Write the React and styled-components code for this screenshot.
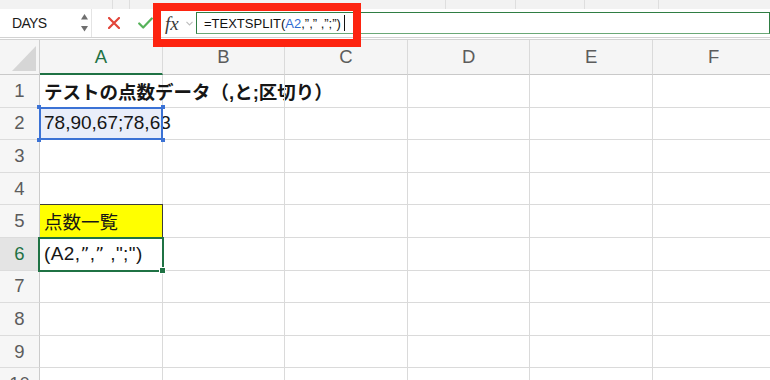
import styled, { createGlobalStyle } from "styled-components";

const GlobalStyle = createGlobalStyle`
  html, body {
    margin: 0;
    padding: 0;
    background: #ffffff;
    overflow: hidden;
  }
  body {
    width: 770px;
    height: 380px;
    font-family: "Liberation Sans", "Noto Sans CJK JP", sans-serif;
  }
`;

const Window = styled.div`
  position: relative;
  width: 770px;
  height: 380px;
  overflow: hidden;
`;

const Ribbon = styled.div`
  display: flex;
  height: 9px;
  background: #f2f2f2;
`;

const RibbonItem = styled.div`
  flex: none;
  width: ${(p) => p.$w}px;
  border-right: 1px solid #dedede;
  box-sizing: border-box;
`;

const FormulaBar = styled.div`
  display: flex;
  align-items: center;
  height: 28px;
  background: #ffffff;
  border-bottom: 3px double #d2d2d2;
`;

const NameBox = styled.div`
  flex: none;
  display: flex;
  align-items: center;
  width: 92px;
  height: 100%;
  box-sizing: border-box;
  padding: 0 2px 0 12px;
  border-right: 1px solid #e4e4e4;
  font-size: 14px;
  letter-spacing: -0.7px;
  color: #1a1a1a;
`;

const Spinner = styled.svg`
  margin-left: auto;
`;

const Actions = styled.div`
  flex: none;
  display: flex;
  align-items: center;
  gap: 18px;
  width: 61px;
  box-sizing: border-box;
  padding-left: 16px;
`;

const FxArea = styled.div`
  flex: none;
  display: flex;
  align-items: center;
  gap: 7px;
  width: 43px;
  box-sizing: border-box;
  padding-left: 12px;
`;

const Fx = styled.span`
  font-family: "Liberation Serif", "DejaVu Serif", serif;
  font-style: italic;
  font-size: 19px;
  color: #3a3a3a;
  line-height: 1;
`;

const FormulaInput = styled.div`
  flex: 1;
  display: flex;
  align-items: center;
  height: 22px;
  box-sizing: border-box;
  padding-left: 7px;
  border: 1px solid #2f7d43;
  border-bottom-color: #6aa877;
  font-family: "Liberation Sans", sans-serif;
  font-size: 13px;
  color: #111111;
  white-space: nowrap;
`;

const Ref = styled.span`
  color: #2d6bd2;
`;

const Caret = styled.span`
  display: inline-block;
  width: 1px;
  height: 16px;
  margin-left: 3px;
  background: #111111;
`;

const Highlight = styled.div`
  position: absolute;
  left: 153px;
  top: 3px;
  width: 208px;
  height: 44px;
  box-sizing: border-box;
  border: 8px solid #fd2410;
`;

const Sheet = styled.div`
  display: grid;
  grid-template-columns: 40px repeat(6, 122.6px);
  grid-template-rows: 35px repeat(10, 32.6px);
`;

const Corner = styled.div`
  display: flex;
  align-items: flex-end;
  justify-content: flex-end;
  padding: 0 3px 3px 0;
  background: #f5f5f5;
  border-right: 1px solid #cfcfcf;
  border-bottom: 1px solid #c9c9c9;
`;

const ColHeader = styled.div`
  display: flex;
  align-items: center;
  justify-content: center;
  box-sizing: border-box;
  background: #f5f5f5;
  border-right: 1px solid #dadada;
  border-bottom: ${(p) => (p.$active ? "2px solid #1f7244" : "1px solid #c9c9c9")};
  color: ${(p) => (p.$active ? "#1f7244" : "#5c5c5c")};
  font-size: 18.5px;
  padding-top: ${(p) => (p.$active ? "1px" : "0")};
`;

const RowHeader = styled.div`
  display: flex;
  align-items: center;
  justify-content: center;
  box-sizing: border-box;
  background: ${(p) => (p.$active ? "#e4e4e4" : "#f6f6f6")};
  border-right: 1px solid #cbcbcb;
  border-bottom: 1px solid #dcdcdc;
  color: ${(p) => (p.$active ? "#1f7244" : "#5c5c5c")};
  font-size: 18.5px;
`;

const Cell = styled.div`
  display: flex;
  align-items: center;
  box-sizing: border-box;
  min-width: 0;
  padding-left: 4px;
  white-space: nowrap;
  border-right: 1px solid #dadada;
  border-bottom: 1px solid #dadada;
  font-size: 18.5px;
  color: #161616;
`;

const LatinText = styled.span`
  font-family: "Liberation Sans", sans-serif;
  font-size: 19px;
  letter-spacing: ${(p) => p.$spread || 0}px;
`;

const Quote = styled.span`
  font-family: "DejaVu Sans", "Liberation Sans", sans-serif;
  font-size: 17px;
`;

const TitleCell = styled(Cell)`
  font-weight: 700;
`;

const SelectedCell = styled(Cell)`
  position: relative;
  background: #e9eefa;
  &::after {
    content: "";
    position: absolute;
    top: -1px;
    left: -1px;
    right: -1px;
    bottom: -1px;
    border: 2px solid #3b72d5;
  }
`;

const Handle = styled.span`
  position: absolute;
  z-index: 1;
  width: 4px;
  height: 4px;
  background: #3b72d5;
  ${(p) => (p.$top ? "top: -3px;" : "bottom: -3px;")}
  ${(p) => (p.$left ? "left: -3px;" : "right: -3px;")}
`;

const YellowCell = styled(Cell)`
  background: #ffff00;
  border-right-color: #3c3c3c;
  border-bottom-color: #3c3c3c;
  box-shadow: 0 -1px 0 #3c3c3c;
`;

const ActiveCell = styled(Cell)`
  position: relative;
  &::after {
    content: "";
    position: absolute;
    top: -1px;
    left: -2px;
    right: -2px;
    bottom: -2px;
    border: 2px solid #1f7244;
  }
`;

const FillHandle = styled.span`
  position: absolute;
  z-index: 1;
  right: -4px;
  bottom: -4px;
  width: 5px;
  height: 5px;
  background: #1f7244;
  border: 1px solid #ffffff;
`;

const COLS = ["A", "B", "C", "D", "E", "F"];
const ROWS = [1, 2, 3, 4, 5, 6, 7, 8, 9, 10];

function renderCell(row, col) {
  const key = `${col}${row}`;
  if (key === "A1") return <TitleCell key={key}>テストの点数データ（,と;区切り）</TitleCell>;
  if (key === "A2")
    return (
      <SelectedCell key={key}>
        <LatinText>78,90,67;78,63</LatinText>
        <Handle $top $left />
        <Handle $top />
        <Handle $left />
        <Handle />
      </SelectedCell>
    );
  if (key === "A5") return <YellowCell key={key}>点数一覧</YellowCell>;
  if (key === "A6")
    return (
      <ActiveCell key={key}>
        <LatinText $spread={0.4}>
          (A2,<Quote>”</Quote>,<Quote>”</Quote> ,";")
        </LatinText>
        <FillHandle />
      </ActiveCell>
    );
  return <Cell key={key} />;
}

export default function App() {
  return (
    <Window>
      <GlobalStyle />
      <Ribbon>
        <RibbonItem $w={113} />
        <RibbonItem $w={17} />
        <RibbonItem $w={316} />
        <RibbonItem $w={70} />
        <RibbonItem $w={69} />
        <RibbonItem $w={74} />
      </Ribbon>
      <FormulaBar>
        <NameBox>
          DAYS
          <Spinner width="9" height="20" viewBox="0 0 9 20">
            <path d="M4.5 1 L8 6.5 L1 6.5 Z" fill="#6f6f6f" />
            <path d="M1 13 L8 13 L4.5 18.5 Z" fill="#6f6f6f" />
          </Spinner>
        </NameBox>
        <Actions>
          <svg width="12" height="12" viewBox="0 0 12 12">
            <path d="M1 1 L11 11 M11 1 L1 11" stroke="#e2453a" strokeWidth="2.2" strokeLinecap="round" />
          </svg>
          <svg width="15" height="12" viewBox="0 0 15 12">
            <path d="M1.2 6.5 L5.2 10.5 L13.8 1.5" fill="none" stroke="#56b25a" strokeWidth="2.2" strokeLinecap="round" strokeLinejoin="round" />
          </svg>
        </Actions>
        <FxArea>
          <Fx>fx</Fx>
          <svg width="7" height="5" viewBox="0 0 7 5">
            <path d="M0.5 0.8 L3.5 4 L6.5 0.8" fill="none" stroke="#bdbdbd" strokeWidth="1.1" />
          </svg>
        </FxArea>
        <FormulaInput>
          =TEXTSPLIT(<Ref>A2</Ref>,”,” ,”;”)
          <Caret />
        </FormulaInput>
      </FormulaBar>
      <Highlight />
      <Sheet>
        <Corner>
          <svg width="24" height="25" viewBox="0 0 24 25">
            <path d="M24 0 L24 25 L0 25 Z" fill="#d6d6d6" />
          </svg>
        </Corner>
        {COLS.map((c) => (
          <ColHeader key={c} $active={c === "A"}>
            {c}
          </ColHeader>
        ))}
        {ROWS.map((r) => [
          <RowHeader key={`r${r}`} $active={r === 6}>
            {r}
          </RowHeader>,
          ...COLS.map((c) => renderCell(r, c)),
        ])}
      </Sheet>
    </Window>
  );
}
